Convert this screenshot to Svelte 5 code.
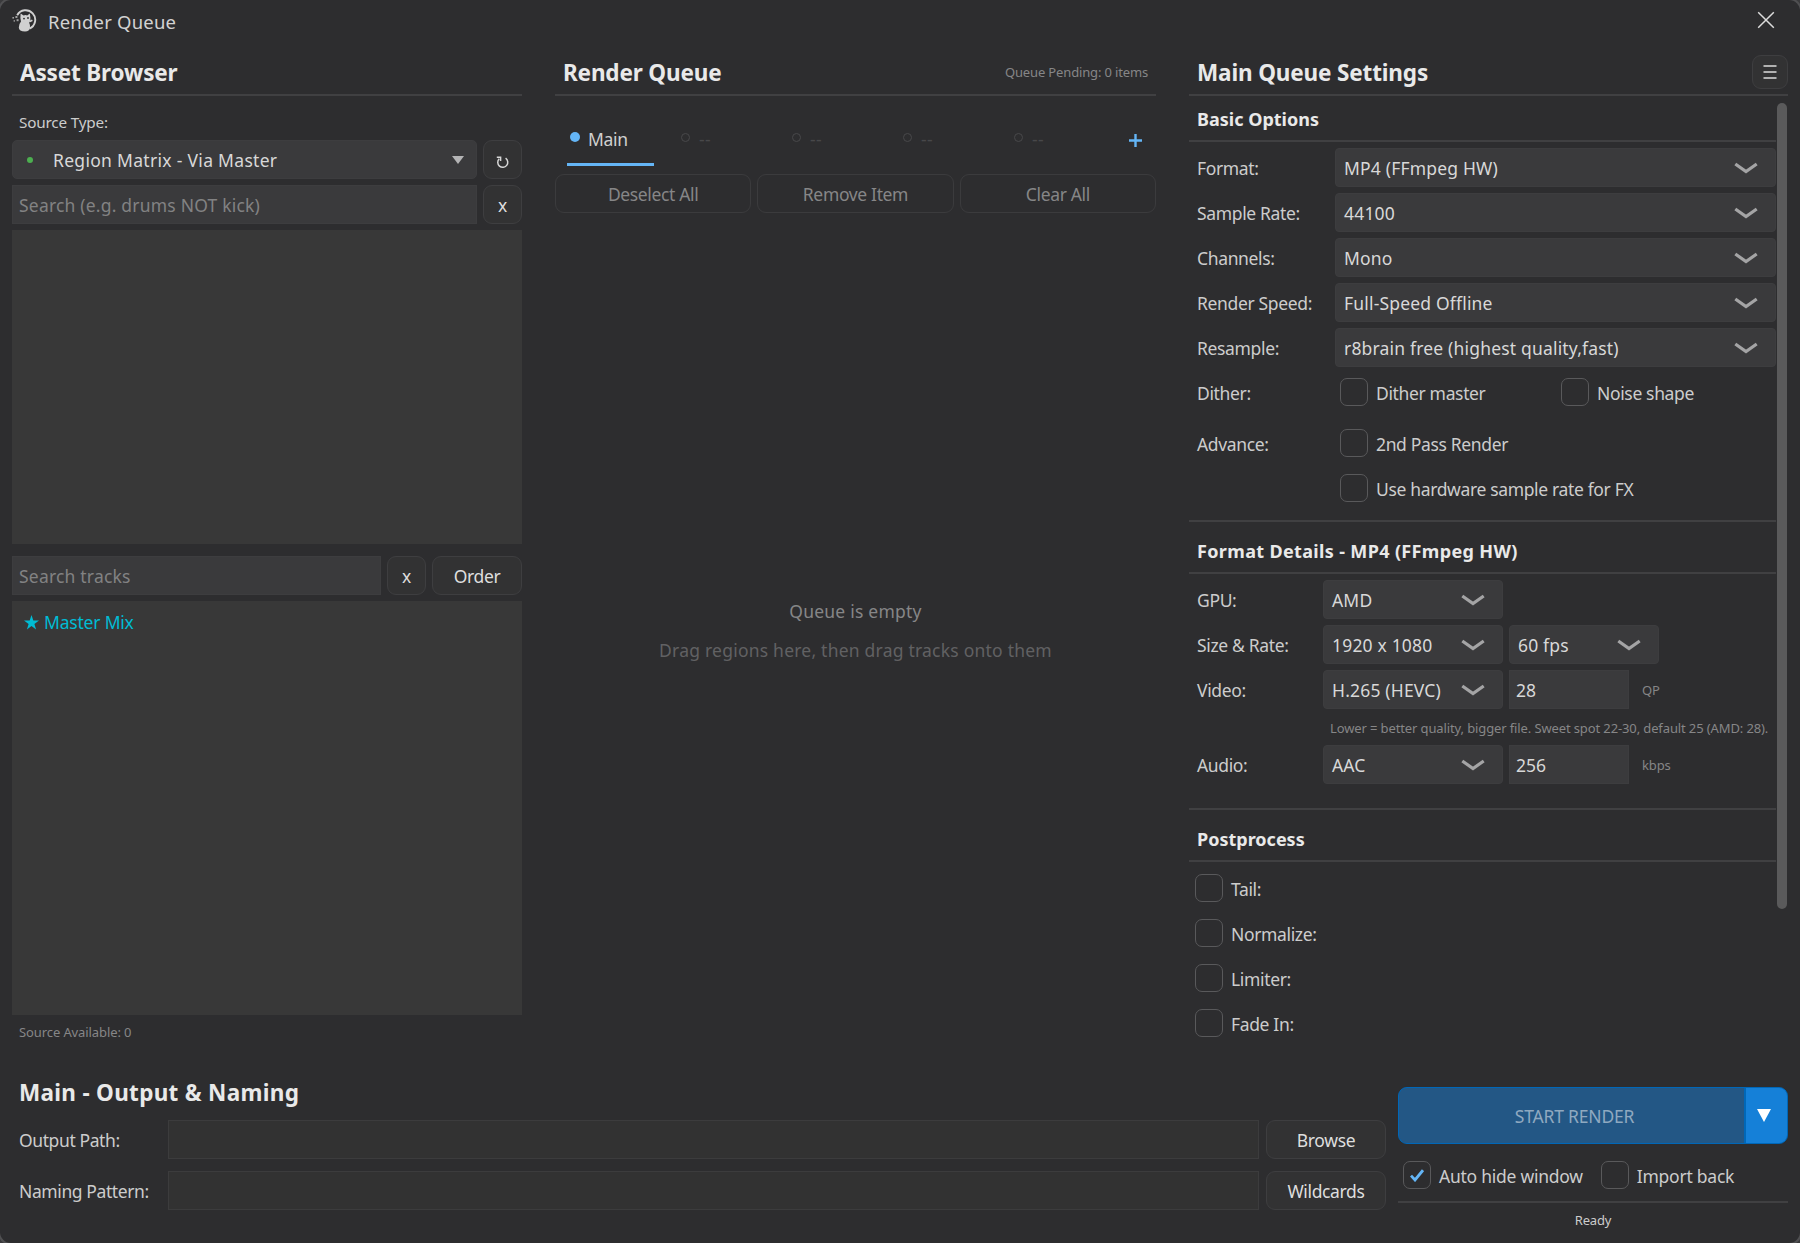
<script>
  /**
   * Render queue window: asset browser on the left, queue in the middle,
   * settings of the selected queue on the right, output + start at the bottom.
   */

  let sourceType = $state('Region Matrix - Via Master')
  let search = $state('')
  let trackSearch = $state('')
  let outputPath = $state('')
  let namingPattern = $state('')
  let activeTab = $state(0)

  let tabs = ['Main', '--', '--', '--', '--']
  let queueActions = ['Deselect All', 'Remove Item', 'Clear All']

  let basicOptions = [
    { label: 'Format:', value: 'MP4 (FFmpeg HW)' },
    { label: 'Sample Rate:', value: '44100' },
    { label: 'Channels:', value: 'Mono' },
    { label: 'Render Speed:', value: 'Full-Speed Offline' },
    { label: 'Resample:', value: 'r8brain free (highest quality,fast)' },
  ]

  let postprocess = ['Tail:', 'Normalize:', 'Limiter:', 'Fade In:']

  let checked = $state({ 'Auto hide window': true })
</script>

{#snippet check(label)}
  <button class="check" onclick={() => (checked[label] = !checked[label])}>
    <span class="box">
      {#if checked[label]}
        <svg width="14" height="13" viewBox="0 0 14 13" fill="none" stroke="#64b5f6" stroke-width="2.8">
          <path d="M1 6.6L5 11L13 1.2" />
        </svg>
      {/if}
    </span>
    <span class="check-label">{label}</span>
  </button>
{/snippet}

{#snippet combo(value, size)}
  <button class="combo {size}">
    <span>{value}</span>
    <svg width="24" height="13" viewBox="0 0 24 13" fill="none" stroke="#a4a4a5" stroke-width="3.2">
      <path d="M1.3 2L12 9.6L22.7 2" />
    </svg>
  </button>
{/snippet}

<div class="window">
  <header class="titlebar">
    <svg class="logo" width="26" height="24" viewBox="0 0 26 24">
      <path d="M5.2 6.2A9.6 9.6 0 1 1 17.5 19.6" fill="none" stroke="#d0d0d0" stroke-width="1.9" />
      <path
        d="M8.6 4.6L11.6 6.4Q13.6 5.8 15.2 6.4L17.8 4.6L18.4 8.6Q19 11.4 17 13.2Q18.4 16 18 18.8Q17.6 22.4 13 22.4Q7 22.4 6.8 18.4Q6.8 15.2 9 12.6Q8 9 8.6 4.6Z"
        fill="#d0d0d0"
      />
      <path d="M17.2 12.8L20.4 11.2" stroke="#d0d0d0" stroke-width="1.8" />
      <circle cx="12" cy="9.6" r="0.9" fill="#2d2d2f" />
      <circle cx="16" cy="9" r="0.9" fill="#2d2d2f" />
      <g fill="#a0a0a0">
        <rect x="0.4" y="8" width="1.6" height="1.6" />
        <rect x="3.4" y="7" width="2" height="2" />
        <rect x="1.6" y="11.2" width="1.4" height="1.4" />
        <rect x="4.6" y="10.2" width="2" height="2" />
      </g>
    </svg>
    <span class="title">Render Queue</span>
    <button class="close" aria-label="Close">
      <svg width="18" height="18" viewBox="0 0 18 18" stroke="#dcdcdc" stroke-width="1.5">
        <path d="M1.2 1.2L16.8 16.8M16.8 1.2L1.2 16.8" />
      </svg>
    </button>
  </header>

  <main class="columns">
    <!-- Asset browser -->
    <section class="assets">
      <div class="head"><h2>Asset Browser</h2></div>
      <div class="source-label">Source Type:</div>
      <div class="row">
        <button class="source">
          <i class="status"></i>
          <span>{sourceType}</span>
          <svg width="12" height="8" viewBox="0 0 12 8"><path d="M0 0H12L6 8Z" fill="#b4b4b5" /></svg>
        </button>
        <button class="btn square" aria-label="Refresh">
          <svg class="refresh" width="14" height="14" viewBox="0 0 14 14" fill="none" stroke="#d8d8d8" stroke-width="1.5">
            <path d="M9.6 3.2A5 5 0 1 1 3.2 3.8" />
            <path d="M0.8 2.2H4.6V6" />
          </svg>
        </button>
      </div>
      <div class="row">
        <input class="field" placeholder="Search (e.g. drums NOT kick)" bind:value={search} />
        <button class="btn square">x</button>
      </div>
      <div class="list regions"></div>
      <div class="row">
        <input class="field" placeholder="Search tracks" bind:value={trackSearch} />
        <button class="btn square">x</button>
        <button class="btn order">Order</button>
      </div>
      <div class="list tracks">
        <div class="track">
          <svg width="15" height="15" viewBox="0 0 15 15">
            <path d="M7.5 0L9.3 5.5H15L10.4 8.9L12.1 14.5L7.5 11.1L2.9 14.5L4.6 8.9L0 5.5H5.7Z" fill="#00bcd4" />
          </svg>
          <span>Master Mix</span>
        </div>
      </div>
      <div class="available">Source Available: 0</div>
    </section>

    <!-- Queue -->
    <section class="queue">
      <div class="head">
        <h2>Render Queue</h2>
        <span class="pending">Queue Pending: 0 items</span>
      </div>
      <div class="tabs">
        {#each tabs as tab, i}
          <button class="tab" class:active={i === activeTab} onclick={() => (activeTab = i)}>
            <i class="dot"></i>
            <span>{tab}</span>
          </button>
        {/each}
        <button class="add" aria-label="Add queue">
          <svg width="13" height="13" viewBox="0 0 13 13" stroke="#64b5f6" stroke-width="2.4">
            <path d="M6.5 0V13M0 6.5H13" />
          </svg>
        </button>
      </div>
      <div class="actions">
        {#each queueActions as action}
          <button class="btn ghost">{action}</button>
        {/each}
      </div>
      <div class="empty">
        <p>Queue is empty</p>
        <p class="hint">Drag regions here, then drag tracks onto them</p>
      </div>
    </section>

    <!-- Settings -->
    <section class="settings">
      <div class="head">
        <h2>Main Queue Settings</h2>
        <button class="btn menu" aria-label="Menu">
          <svg width="14" height="14" viewBox="0 0 14 14" stroke="#dcdcdc" stroke-width="1.4">
            <path d="M0.5 1H13.5M0.5 7H13.5M0.5 13H13.5" />
          </svg>
        </button>
      </div>
      <div class="scroller">
        <div class="options">
          <h3 class="first">Basic Options</h3>
          <div class="group basic">
            {#each basicOptions as option}
              <div class="option">
                <label>{option.label}</label>
                {@render combo(option.value, 'wide')}
              </div>
            {/each}
            <div class="option checks">
              <label>Dither:</label>
              <div class="half">{@render check('Dither master')}</div>
              {@render check('Noise shape')}
            </div>
            <div class="option checks advance">
              <label>Advance:</label>
              {@render check('2nd Pass Render')}
            </div>
            <div class="option checks">
              <label></label>
              {@render check('Use hardware sample rate for FX')}
            </div>
          </div>

          <h3 class="details">Format Details - MP4 (FFmpeg HW)</h3>
          <div class="group format">
            <div class="option">
              <label>GPU:</label>
              {@render combo('AMD', 'mid')}
            </div>
            <div class="option">
              <label>Size &amp; Rate:</label>
              {@render combo('1920 x 1080', 'mid')}
              {@render combo('60 fps', 'small')}
            </div>
            <div class="option">
              <label>Video:</label>
              {@render combo('H.265 (HEVC)', 'mid')}
              <input class="field number" value="28" />
              <span class="unit">QP</span>
            </div>
            <div class="note">Lower = better quality, bigger file. Sweet spot 22-30, default 25 (AMD: 28).</div>
            <div class="option">
              <label>Audio:</label>
              {@render combo('AAC', 'mid')}
              <input class="field number" value="256" />
              <span class="unit">kbps</span>
            </div>
          </div>

          <h3>Postprocess</h3>
          <div class="group post">
            {#each postprocess as item}
              {@render check(item)}
            {/each}
          </div>
        </div>
        <div class="scrollbar"><div class="thumb"></div></div>
      </div>
    </section>
  </main>

  <footer class="bottom">
    <section class="output">
      <h2>Main - Output &amp; Naming</h2>
      <div class="out-row">
        <label for="path">Output Path:</label>
        <input id="path" class="path" bind:value={outputPath} />
        <button class="btn">Browse</button>
      </div>
      <div class="out-row">
        <label for="naming">Naming Pattern:</label>
        <input id="naming" class="path" bind:value={namingPattern} />
        <button class="btn">Wildcards</button>
      </div>
    </section>
    <section class="start">
      <div class="split">
        <button class="go">START RENDER</button>
        <button class="drop" aria-label="Render options">
          <svg width="14" height="13" viewBox="0 0 14 13"><path d="M0 0H14L7 13Z" fill="#fff" /></svg>
        </button>
      </div>
      <div class="start-checks">
        {@render check('Auto hide window')}
        {@render check('Import back')}
      </div>
      <div class="ready">Ready</div>
    </section>
  </footer>
</div>

<style>
  :global(body) { background: #3a3a3c; overflow: hidden; }

  .window, .window * { box-sizing: border-box; }
  .window {
    width: 1800px; height: 1243px; padding: 0 12px;
    display: flex; flex-direction: column;
    background: #2d2d2f; border-radius: 11px;
    box-shadow: 0 0 0 2px #505052;
    font-family: "Noto Sans", "Open Sans", sans-serif;
    font-size: 17.5px; letter-spacing: -0.35px; line-height: 24px;
    color: #cccccc;
  }
  button, input { font: inherit; letter-spacing: inherit; color: inherit; margin: 0; outline: none; }
  button { background: none; border: none; padding: 0; cursor: pointer; }
  svg { display: block; flex: none; }
  i { display: block; flex: none; }
  h2, h3, p { margin: 0; }
  h2 { font-size: 22.5px; font-weight: 700; letter-spacing: -0.15px; line-height: 30px; color: #e9e9e9; }
  h3 {
    height: 54px; padding: 16px 8px 0;
    border-top: 2px solid #404042; border-bottom: 2px solid #404042;
    font-size: 18px; font-weight: 700; letter-spacing: 0; line-height: 26px; color: #e9e9e9;
  }

  /* Title bar */
  .titlebar { display: flex; align-items: center; height: 44px; flex: none; }
  .logo { margin-top: -2px; }
  .title { margin-left: 10px; font-size: 18.5px; letter-spacing: 0.2px; color: #d2d2d2; }
  .close { margin: -4px 13px 0 auto; }

  /* Columns */
  .columns { display: flex; height: 1006px; flex: none; }
  .head {
    height: 52px; padding: 8px 8px 0; flex: none;
    display: flex; align-items: center; justify-content: space-between;
    border-bottom: 2px solid #404042;
  }
  .assets { width: 510px; margin-right: 33px; }
  .queue { width: 601px; margin-right: 33px; display: flex; flex-direction: column; }
  .settings { width: 599px; }

  .btn {
    height: 39px; padding-top: 1px;
    display: flex; align-items: center; justify-content: center;
    background: #323233; border: 1.5px solid #3e3e40; border-radius: 9px;
    color: #dedede;
  }
  .square { width: 39px; flex: none; }
  .refresh { margin-top: 3px; }
  .order { width: 90px; flex: none; }
  .row { display: flex; gap: 6px; margin-bottom: 6px; }
  .field {
    flex: 1; min-width: 0; height: 39px; padding: 0 6px;
    background: #3a3a3c; border: 1px solid #3d3d3f; border-radius: 0;
    letter-spacing: 0.2px; color: #d8d8d8;
  }
  .field::placeholder { color: #828283; opacity: 1; }

  .source-label { height: 44px; padding: 14px 7px 0; font-size: 15.3px; letter-spacing: -0.2px; }
  .source {
    flex: 1; height: 39px; padding: 0 12px 0 14px;
    display: flex; align-items: center;
    background: #3a3a3c; border: 1px solid #3d3d3f; border-radius: 5px;
    letter-spacing: 0.3px; color: #d8d8d8;
  }
  .source span { margin: 1px auto 0 20px; }
  .status { width: 6px; height: 6px; border-radius: 50%; background: #4caf50; }
  .list { background: #383838; }
  .regions { height: 314px; margin-bottom: 12px; }
  .tracks { height: 414px; padding: 9px 12px; }
  .track { display: flex; align-items: center; gap: 5px; color: #00bcd4; letter-spacing: -0.2px; }
  .available { padding: 5px 7px; font-size: 13px; letter-spacing: -0.1px; color: #868687; }

  /* Queue */
  .pending { font-size: 13px; letter-spacing: -0.15px; color: #868687; margin-top: -2px; }
  .tabs { display: flex; height: 70px; padding-left: 12px; flex: none; }
  .tab {
    width: 87px; height: 70px; margin-right: 24px; padding: 15px 0 0 3px;
    display: flex; align-items: center; gap: 9px;
    border-bottom: 3px solid transparent; color: #48484a;
  }
  .tab span { margin-top: 3px; letter-spacing: 0.3px; }
  .dot { width: 9px; height: 9px; border: 1.5px solid #48484a; border-radius: 50%; }
  .tab.active { color: #d0d0d0; border-color: #64b5f6; gap: 8px; }
  .tab.active span { letter-spacing: -0.35px; }
  .tab.active .dot { background: #64b5f6; border: none; width: 10px; height: 10px; }
  .add { margin: 18px 0 0 auto; padding-right: 14px; }
  .tabs .tab:nth-last-child(2) { margin-right: 0; }
  .actions { display: flex; gap: 6px; margin-top: 8px; }
  .ghost { flex: 1; padding-top: 0; background: transparent; border-color: #3b3b3d; color: #868687; }
  .empty { margin: auto 0; padding-bottom: 2px; text-align: center; line-height: 39px; letter-spacing: 0.22px; color: #868687; }
  .hint { color: #616163; }

  /* Settings */
  .menu { width: 36px; height: 34px; margin: 0 -8px 2px 0; padding: 0; }
  .scroller { display: flex; height: 952px; }
  .options { width: 587px; }
  .first { height: 46px; padding-top: 10px; border-top: none; }
  .details { letter-spacing: 0.35px; }
  .option { display: flex; height: 39px; margin-bottom: 6px; }
  .option label { width: 146px; padding: 8px 0 0 8px; flex: none; }
  .combo {
    height: 39px; padding: 1px 18px 0 8px; flex: none;
    display: flex; align-items: center; justify-content: space-between;
    background: #3a3a3c; border: 1px solid #3d3d3f; border-radius: 4px;
    letter-spacing: 0.18px; color: #d8d8d8; white-space: nowrap;
  }
  .wide { width: 441px; padding-right: 17px; }
  .mid { width: 180px; padding-right: 17px; }
  .small { width: 150px; margin-left: 6px; padding-right: 17px; }
  .basic { height: 378px; padding-top: 6px; }
  .checks { align-items: flex-start; }
  .checks label { width: 151px; }
  .half { width: 221px; }
  .checks .check { margin-top: 5px; }
  .advance { margin-top: 12px; }
  .format { height: 234px; padding-top: 6px; }
  .format .option label { width: 134px; }
  .number { flex: none; width: 120px; margin-left: 6px; letter-spacing: 0; }
  .unit { margin: 8px 0 0 13px; font-size: 13px; letter-spacing: -0.15px; color: #868687; }
  .note {
    height: 30px; padding: 1px 0 0 141px;
    font-size: 13px; letter-spacing: -0.12px; color: #868687; white-space: nowrap;
  }
  .post { padding: 12px 0 0 6px; display: flex; flex-direction: column; gap: 17px; }
  .scrollbar { width: 10px; margin-left: 1px; padding-top: 7px; }
  .thumb { height: 806px; border-radius: 5px; background: #5a5a5b; }

  .check { display: flex; align-items: center; gap: 8px; height: 28px; }
  .box {
    width: 28px; height: 28px; border: 1.5px solid #59595b; border-radius: 7px;
    display: flex; align-items: center; justify-content: center;
  }
  .check-label { padding-top: 1px; white-space: nowrap; }

  /* Bottom */
  .bottom { display: flex; height: 193px; }
  .output { width: 1374px; padding-top: 28px; }
  .output h2 { padding-left: 7px; letter-spacing: 0.3px; margin-bottom: 12px; }
  .out-row { display: flex; height: 39px; margin-bottom: 12px; }
  .out-row label { width: 156px; padding: 8px 0 0 7px; letter-spacing: -0.4px; }
  .path { flex: 1; height: 39px; background: #323232; border: 1.5px solid #3c3c3d; border-radius: 0; margin-right: 7px; }
  .out-row .btn { width: 120px; }
  .start { width: 390px; margin-left: 12px; padding-top: 37px; }
  .split { display: flex; height: 57px; border: 1.5px solid #0067b8; border-radius: 9px; overflow: hidden; background: #0067b8; }
  .go { flex: 1; padding-left: 6px; background: #235785; color: #8fa9c0; letter-spacing: -0.2px; }
  .drop { width: 41px; margin-left: 2px; padding-right: 6px; background: #1580d8; display: flex; align-items: center; justify-content: center; }
  .start-checks { display: flex; gap: 18px; height: 59px; padding: 17px 0 0 5px; border-bottom: 2px solid #404042; }
  .start-checks .check-label { letter-spacing: -0.25px; }
  .ready { padding: 5px 0 0; text-align: center; font-size: 13px; letter-spacing: -0.2px; }
</style>
